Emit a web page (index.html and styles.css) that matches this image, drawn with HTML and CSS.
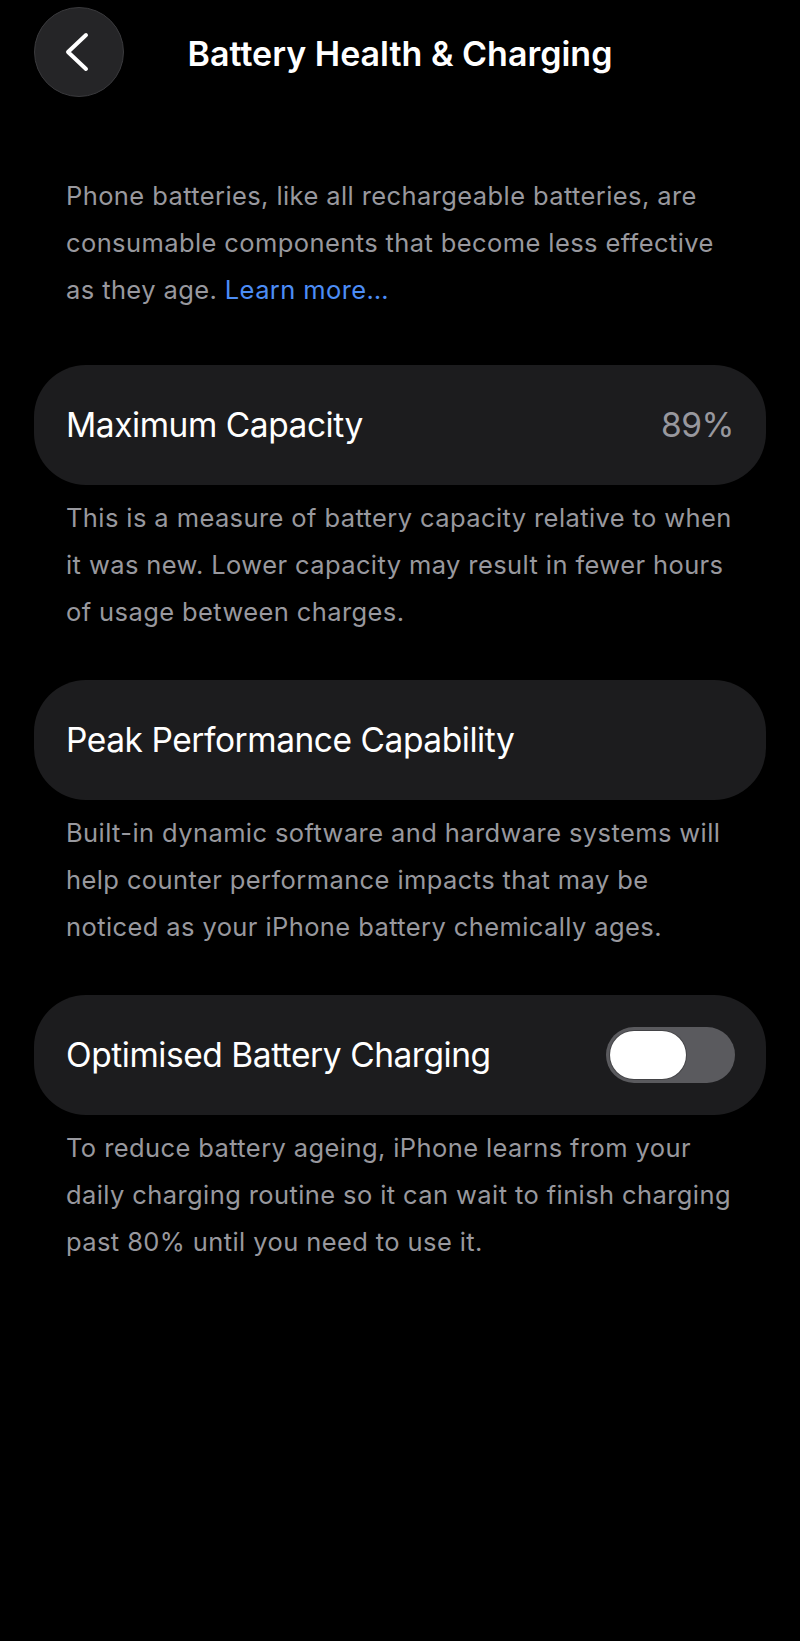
FILE: index.html
```html
<!DOCTYPE html>
<html lang="en">
<head>
<meta charset="utf-8">
<title>Battery Health &amp; Charging</title>
<link rel="stylesheet" href="styles.css">
</head>
<body>
<div class="screen">
  <header class="nav">
    <button class="back" aria-label="Back">
      <svg viewBox="0 0 24 40" width="24" height="40" aria-hidden="true">
        <polyline points="21,3 3,20 21,37" fill="none" stroke="#fff" stroke-width="4" stroke-linecap="round" stroke-linejoin="round"/>
      </svg>
    </button>
    <h1 class="title">Battery Health &amp; Charging</h1>
    <span class="nav-spacer"></span>
  </header>

  <p class="note intro">Phone batteries, like all rechargeable batteries, are consumable components that become less effective as they age. <a class="link" href="#">Learn more…</a></p>

  <section class="group">
    <div class="cell">
      <span class="cell-label">Maximum Capacity</span>
      <span class="cell-value">89%</span>
    </div>
    <p class="note">This is a measure of battery capacity relative to when it was new. Lower capacity may result in fewer hours of usage between charges.</p>
  </section>

  <section class="group">
    <div class="cell">
      <span class="cell-label">Peak Performance Capability</span>
    </div>
    <p class="note">Built-in dynamic software and hardware systems will help counter performance impacts that may be noticed as your iPhone battery chemically ages.</p>
  </section>

  <section class="group">
    <div class="cell">
      <span class="cell-label">Optimised Battery Charging</span>
      <span class="switch" role="switch" aria-checked="false"><span class="knob"></span></span>
    </div>
    <p class="note">To reduce battery ageing, iPhone learns from your daily charging routine so it can wait to finish charging past 80% until you need to use it.</p>
  </section>
</div>
</body>
</html>
```
FILE: styles.css
```css
html, body {
  margin: 0;
  padding: 0;
  background: #000;
}

body {
  font-family: "Inter", "Noto Sans", "Liberation Sans", sans-serif;
  color: #fff;
  -webkit-font-smoothing: antialiased;
}

.screen {
  width: 800px;
  min-height: 1641px;
  box-sizing: border-box;
  padding: 7px 34px 0;
}

/* navigation bar */
.nav {
  display: grid;
  grid-template-columns: 90px 1fr 90px;
  align-items: center;
  height: 90px;
}

.back {
  width: 90px;
  height: 90px;
  border-radius: 50%;
  border: 1px solid #3a3a3d;
  background: #252527;
  display: flex;
  align-items: center;
  justify-content: center;
  padding: 0 4px 0 0;
  cursor: pointer;
}

.title {
  margin: 2px 0 0;
  text-align: center;
  font-size: 34px;
  font-weight: 600;
  letter-spacing: 0;
  color: #fff;
}

/* footnotes and intro copy */
.note {
  margin: 0;
  padding: 0 28px 0 32px;
  font-size: 25.5px;
  line-height: 47px;
  color: #98989e;
  letter-spacing: 0.4px;
}

.intro {
  margin-top: 75px;
  margin-bottom: 52px;
}

.link {
  color: #4c8df6;
  text-decoration: none;
}

.group {
  margin-bottom: 45px;
}

.group .note {
  margin-top: 9px;
}

/* grouped cells */
.cell {
  display: flex;
  align-items: center;
  justify-content: space-between;
  height: 120px;
  padding: 0 32px;
  border-radius: 52px;
  background: #1c1c1e;
}

.cell-label {
  font-size: 33.5px;
  letter-spacing: -0.45px;
  color: #fff;
}

.cell-value {
  font-size: 33.5px;
  letter-spacing: -0.45px;
  color: #98989e;
}

/* toggle, off state */
.switch {
  position: relative;
  width: 129px;
  height: 56px;
  margin-right: -1px;
  border-radius: 28px;
  background: #5a5a5e;
}

.knob {
  position: absolute;
  left: 4px;
  top: 4px;
  width: 76px;
  height: 48px;
  border-radius: 24px;
  background: #fff;
  box-shadow: 0 0 0 1px rgba(0, 0, 0, 0.25);
}
```
